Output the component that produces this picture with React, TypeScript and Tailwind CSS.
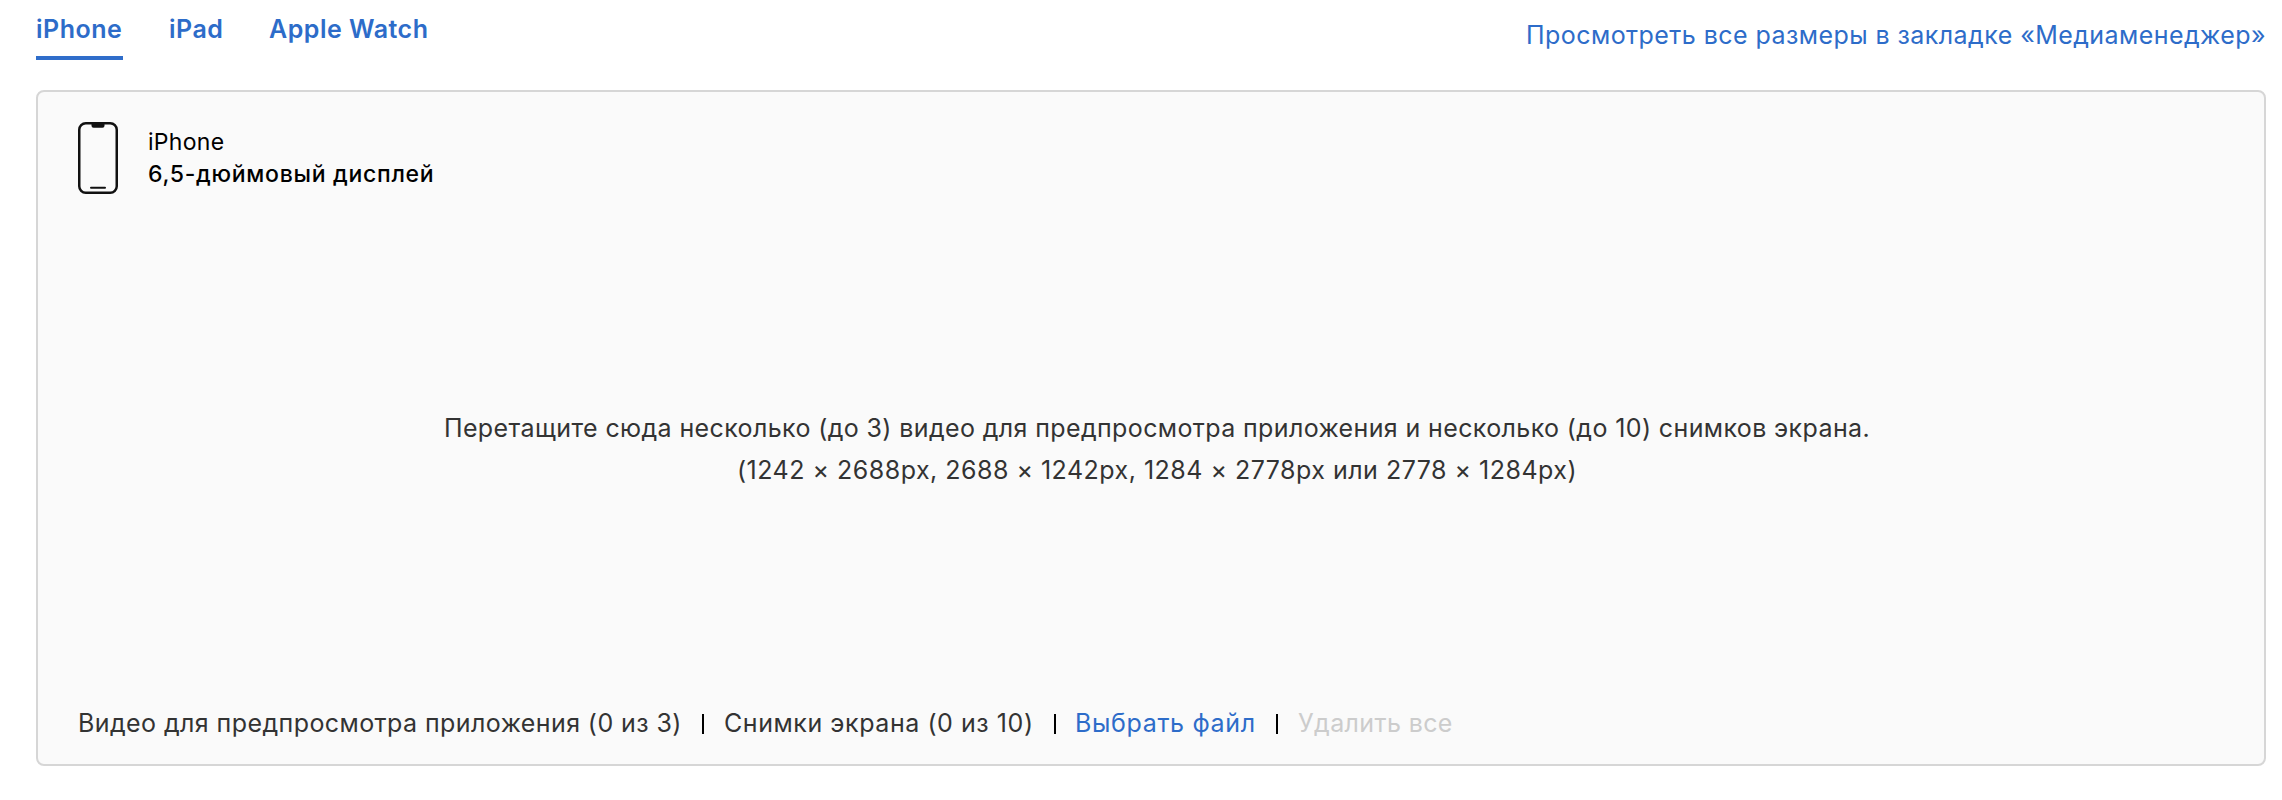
const TABS = [
  { label: "iPhone", active: true, className: "w-[87px]" },
  { label: "iPad", active: false, className: "w-[55px]" },
  { label: "Apple Watch", active: false, className: "-ml-px" },
];

function PhoneIcon() {
  return (
    <svg width="40" height="72" viewBox="0 0 40 72" fill="none" className="shrink-0">
      <rect x="1.25" y="1.25" width="37.5" height="69.5" rx="6.5" stroke="#111" strokeWidth="2.5" />
      <path d="M13.5 2h13v1.8a2 2 0 0 1-2 2h-9a2 2 0 0 1-2-2z" fill="#111" />
      <path d="M13 65.7h14" stroke="#111" strokeWidth="2" strokeLinecap="round" />
    </svg>
  );
}

function Separator() {
  return <span className="mt-[6px] h-5 w-[2px] shrink-0 bg-black" />;
}

export default function App() {
  return (
    <div className="flex h-[800px] w-[2282px] flex-col overflow-hidden bg-white pr-4 pl-9 font-['Inter',sans-serif] text-[25px] leading-[30px] whitespace-nowrap text-[#333]">
      <header className="flex h-[90px] shrink-0 items-start justify-between text-[#2d6cc9]">
        <nav className="flex gap-[46px] pt-[14px]">
          {TABS.map((tab) => (
            <a
              key={tab.label}
              className={`h-[46px] font-semibold tracking-[0.5px] ${tab.className} ${tab.active ? "border-b-4 border-[#2f6dca]" : ""}`}
            >
              {tab.label}
            </a>
          ))}
        </nav>
        <a className="pt-5 tracking-[0.44px]">Просмотреть все размеры в закладке «Медиаменеджер»</a>
      </header>

      <section className="flex h-[676px] flex-col rounded-[8px] border-2 border-[#d6d6d6] bg-[#fafafa]">
        <div className="flex gap-[30px] pt-[30px] pl-10">
          <PhoneIcon />
          <div className="pt-1 text-[23px] leading-8 text-black">
            <p className="tracking-[0.3px]">iPhone</p>
            <p className="font-medium tracking-[0.7px]">6,5-дюймовый дисплей</p>
          </div>
        </div>

        <div className="mt-[213px] pl-3 text-center leading-[42px]">
          <p className="tracking-[0.38px]">
            Перетащите сюда несколько (до 3) видео для предпросмотра приложения и несколько (до 10) снимков экрана.
          </p>
          <p className="tracking-[0.49px]">(1242 × 2688px, 2688 × 1242px, 1284 × 2778px или 2778 × 1284px)</p>
        </div>

        <footer className="mt-auto flex pb-[26px] pl-10">
          <span className="w-[624px] tracking-[0.42px]">Видео для предпросмотра приложения (0 из 3)</span>
          <Separator />
          <span className="ml-5 w-[330px] tracking-[0.56px]">Снимки экрана (0 из 10)</span>
          <Separator />
          <a className="ml-[19px] w-[201px] tracking-[0.65px] text-[#2d6cc9]">Выбрать файл</a>
          <Separator />
          <span className="ml-5 tracking-[0.38px] text-[#ccc]">Удалить все</span>
        </footer>
      </section>
    </div>
  );
}
